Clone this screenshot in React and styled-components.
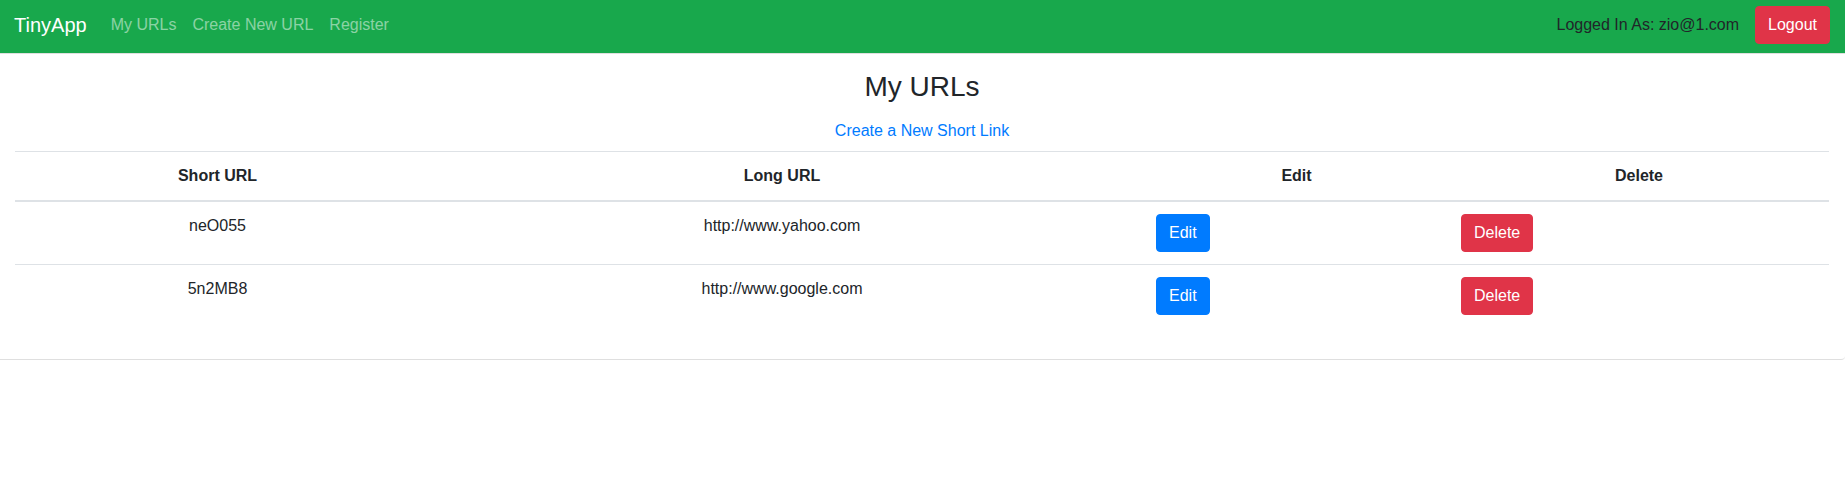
import React from 'react';
import styled, { createGlobalStyle } from 'styled-components';

const GlobalStyle = createGlobalStyle`
  body {
    margin: 0;
    font-family: "Liberation Sans", Arial, sans-serif;
    font-size: 16px;
    line-height: 1.5;
    color: #212529;
    background: #fff;
  }
  * { box-sizing: border-box; }
`;

const urls = [
  { id: 'neO055', long: 'http://www.yahoo.com' },
  { id: '5n2MB8', long: 'http://www.google.com' },
];

const App = () => {
  return (
    <>
      <GlobalStyle />
      <NavBar>
        <Brand>TinyApp</Brand>
        <NavLinks>
          <NavLink>My URLs</NavLink>
          <NavLink>Create New URL</NavLink>
          <NavLink>Register</NavLink>
        </NavLinks>
        <UserArea>
          <span>Logged In As: zio@1.com</span>
          <Button variant="danger">Logout</Button>
        </UserArea>
      </NavBar>
      <Card>
        <Title>My URLs</Title>
        <CreateLink>Create a New Short Link</CreateLink>
        <Table>
          <colgroup>
            <col style={{ width: 405 }} />
            <col style={{ width: 724 }} />
            <col style={{ width: 305 }} />
            <col style={{ width: 380 }} />
          </colgroup>
          <thead>
            <tr>
              <th>Short URL</th>
              <th>Long URL</th>
              <th>Edit</th>
              <th>Delete</th>
            </tr>
          </thead>
          <tbody>
            {urls.map((u) => (
              <tr key={u.id}>
                <td>{u.id}</td>
                <td>{u.long}</td>
                <ActionCell><Button variant="primary">Edit</Button></ActionCell>
                <ActionCell><Button variant="danger">Delete</Button></ActionCell>
              </tr>
            ))}
          </tbody>
        </Table>
      </Card>
    </>
  );
};

const NavBar = styled.nav`
  display: flex;
  align-items: center;
  height: 53px;
  padding: 6px 15px 9px 14px;
  background: #18a84c;
`;

const Brand = styled.a`
  font-size: 20px;
  line-height: 30px;
  color: #fff;
  margin-right: 16px;
  cursor: pointer;
`;

const NavLinks = styled.div`
  display: flex;
  flex: 1;
`;

const NavLink = styled.a`
  padding: 0 8px;
  line-height: 24px;
  color: rgba(255, 255, 255, 0.5);
  cursor: pointer;
`;

const UserArea = styled.div`
  display: flex;
  align-items: center;
  gap: 16px;
  color: #212529;
`;

const colors = {
  primary: '#007bff',
  danger: '#e03448',
};

const Button = styled.button`
  font-family: inherit;
  font-size: 16px;
  line-height: 24px;
  padding: 6px 12px;
  border: 1px solid ${(p) => colors[p.variant]};
  border-radius: 4px;
  background: ${(p) => colors[p.variant]};
  color: #fff;
  cursor: pointer;
`;

const Card = styled.section`
  display: flex;
  flex-direction: column;
  align-items: center;
  border-top: 1px solid rgba(0, 0, 0, 0.125);
  border-bottom: 1px solid rgba(0, 0, 0, 0.125);
  border-radius: 0 0 4px 0;
  padding: 16px 16px 16px 15px;
`;

const Title = styled.h3`
  margin: 0 0 15px;
  font-size: 28px;
  font-weight: 400;
  line-height: 34px;
`;

const CreateLink = styled.a`
  color: #007bff;
  line-height: 24px;
  margin-bottom: 8px;
  cursor: pointer;
`;

const Table = styled.table`
  width: 100%;
  table-layout: fixed;
  border-collapse: collapse;
  margin-bottom: 16px;
  color: #212529;

  th, td {
    padding: 12px;
    border-top: 1px solid #dee2e6;
    text-align: center;
    vertical-align: top;
    line-height: 24px;
  }

  th {
    font-weight: 700;
    border-bottom: 2px solid #dee2e6;
  }
`;

const ActionCell = styled.td`
  && {
    text-align: left;
  }
`;

export default App;
